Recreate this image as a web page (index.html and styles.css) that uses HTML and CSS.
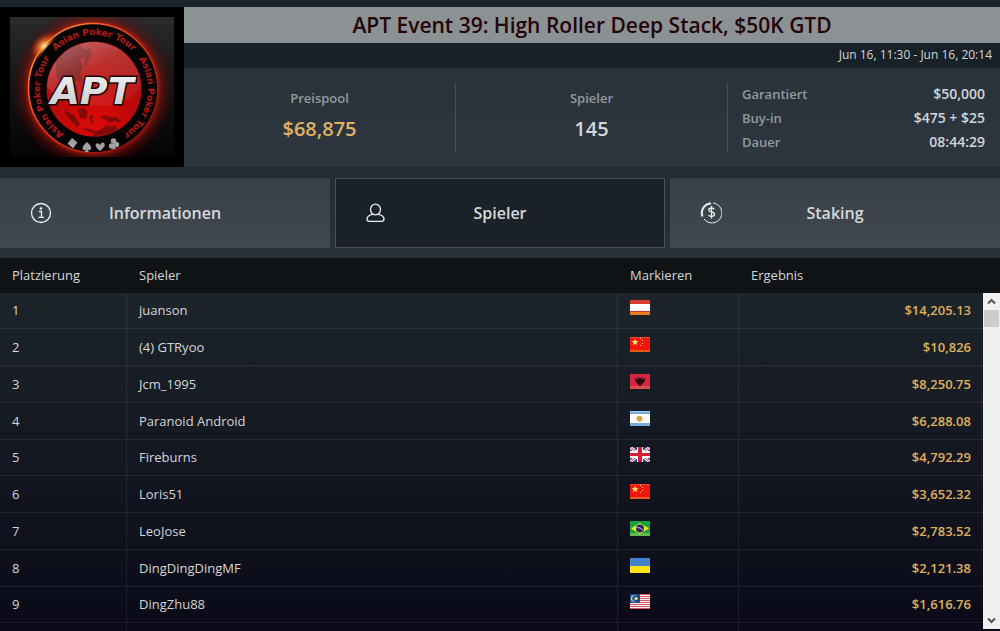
FILE: index.html
```html
<!DOCTYPE html>
<html lang="de">
<head>
<meta charset="utf-8">
<title>APT Event 39</title>
<link rel="stylesheet" href="styles.css">
</head>
<body>
<div class="lobby">
  <header class="event">
    <div class="event-logo">
      <svg class="logo" viewBox="0 0 164 140" role="img" aria-label="APT Asian Poker Tour">
        <defs>
          <linearGradient id="back" x1="0" y1="0" x2="0" y2="1"><stop offset="0" stop-color="#2b2b2c"/><stop offset=".45" stop-color="#171616"/><stop offset="1" stop-color="#050304"/></linearGradient>
          <radialGradient id="halo"><stop offset=".76" stop-color="#f4200c" stop-opacity=".85"/><stop offset=".85" stop-color="#8d0d08" stop-opacity=".45"/><stop offset="1" stop-color="#400" stop-opacity="0"/></radialGradient>
          <radialGradient id="globe" cx=".5" cy=".85" r=".85"><stop offset="0" stop-color="#dc0a08"/><stop offset=".5" stop-color="#bd0808"/><stop offset="1" stop-color="#a81414"/></radialGradient>
          <linearGradient id="gloss" x1="0" y1="0" x2=".7" y2="1"><stop offset="0" stop-color="#fff" stop-opacity=".4"/><stop offset=".5" stop-color="#fff" stop-opacity=".14"/><stop offset="1" stop-color="#fff" stop-opacity=".06"/></linearGradient>
          <radialGradient id="flare"><stop offset="0" stop-color="#fff6b8"/><stop offset=".3" stop-color="#ff9a3c" stop-opacity=".8"/><stop offset="1" stop-color="#f30" stop-opacity="0"/></radialGradient>
          <linearGradient id="rim" x1="0" y1="0" x2="1" y2="1"><stop offset="0" stop-color="#ffb33a"/><stop offset=".4" stop-color="#f5401c"/><stop offset="1" stop-color="#5a0805"/></linearGradient>
          <linearGradient id="steel" x1="0" y1="0" x2="0" y2="1"><stop offset="0" stop-color="#f4f4f4"/><stop offset="1" stop-color="#c6c6c8"/></linearGradient>
          <clipPath id="disc"><circle cx="84" cy="72" r="47"/></clipPath>
          <path id="orbit" d="M53.800 116.800A54 54 0 1 1 111.800 118.300"/>
        </defs>
        <rect width="164" height="140" fill="url(#back)"/>
        <circle cx="83" cy="71" r="82" fill="url(#halo)"/>
        <circle cx="83" cy="71" r="64.500" fill="#070303" stroke="url(#rim)" stroke-width="1.500"/>
        <ellipse cx="34" cy="29" rx="11" ry="16" fill="url(#flare)" transform="rotate(45 34 29)"/>
        <circle cx="84" cy="72" r="63" fill="#050304"/>
        <circle cx="84" cy="72" r="47.500" fill="url(#globe)"/>
        <g clip-path="url(#disc)">
          <path d="M46 44L52 36 58 35 61 28 70 27 72 31 77 33 80 31 82 37 79 43 76 49 74 47 75 40 70 42 73 50 70 57 73 63 70 66 68 62 65 65 68 74 65 81 61 72 57 64 51 66 46 58ZM54 92L59 96 64 98 70 107 67 110 61 104 56 98ZM68 93L73 90 78 95 76 102 70 101ZM79 99L84 98 82 102 84 107 80 105ZM72 111L79 112 86 114 84 116 76 114ZM90 101L94 98 99 100 106 100 112 105 104 104 100 106 95 102ZM83 120L86 114 92 112 97 108 102 110 106 108 107 113 114 118 108 127 99 123 93 123 87 125Z" fill="#6d0b0b" opacity=".8"/>
          <path d="M37 70Q37 23 84 24Q131 24 131 70Q116 88 95 89Q70 89 57 84Q45 80 37 70Z" fill="url(#gloss)"/>
        </g>
        <text class="logo-ring"><textPath href="#orbit" startOffset="0">Asian Poker Tour</textPath></text>
        <text class="logo-ring"><textPath href="#orbit" startOffset="95">Asian Poker Tour</textPath></text>
        <text class="logo-ring"><textPath href="#orbit" startOffset="190">Asian Poker Tour</textPath></text>
        <text class="logo-name" x="82" y="87" text-anchor="middle">APT</text>
        <g fill="#a1a1a1">
          <path d="M62 121L67.500 125.500 63 131.500 57.500 126.500Z"/>
          <path d="M77 125Q82 129 81 132Q80 134 77.500 132.500L79 135H74.500L76 132.500Q73 134 72.500 131.500Q72 129 77 125Z"/>
          <path d="M90 134Q84 129 86 127Q88 125 90 128Q92 124 94.500 126.500Q96 129 90 134Z"/>
          <circle cx="103.500" cy="124" r="2.700"/><circle cx="101.500" cy="129" r="2.700"/><circle cx="106.500" cy="127.500" r="2.700"/><path d="M103 125L106 131.500 102.500 132.500Z"/>
        </g>
      </svg>
    </div>
    <div class="event-main">
      <h1 class="event-title">APT Event 39: High Roller Deep Stack, $50K GTD</h1>
      <p class="event-time">Jun 16, 11:30 - Jun 16, 20:14</p>
      <div class="stats">
        <div class="stat"><span class="stat-label">Preispool</span><strong class="stat-value gold">$68,875</strong></div>
        <div class="stat"><span class="stat-label">Spieler</span><strong class="stat-value">145</strong></div>
        <dl class="facts">
          <div class="fact"><dt>Garantiert</dt><dd>$50,000</dd></div>
          <div class="fact"><dt>Buy-in</dt><dd>$475 + $25</dd></div>
          <div class="fact"><dt>Dauer</dt><dd>08:44:29</dd></div>
        </dl>
      </div>
    </div>
  </header>

  <nav class="tabs">
    <button class="tab" type="button">
      <svg class="tab-icon" viewBox="0 0 22 22"><circle cx="11" cy="11" r="9.500"/><path d="M9 9.500H11.500V15M8.500 15.300H14"/><circle cx="11" cy="6.500" r=".7"/></svg>
      <span class="tab-label">Informationen</span>
    </button>
    <button class="tab active" type="button">
      <svg class="tab-icon" viewBox="0 0 22 22"><ellipse cx="10.500" cy="7.500" rx="5" ry="5.300"/><path d="M7.800 12.300C4 13 2 14.500 2 17C2 18.700 2.700 19.300 4.500 19.300H16.500C18.300 19.300 19 18.700 19 17C19 14.500 17 13 13.200 12.300"/></svg>
      <span class="tab-label">Spieler</span>
    </button>
    <button class="tab" type="button">
      <svg class="tab-icon" viewBox="0 0 22 22"><path d="M13 1A10 10 0 1 1 4 17" stroke-width="1"/><path d="M2.500 14.500A9.500 9.500 0 0 1 11 1.500" stroke-width="2"/><path d="M14.300 7.300C13.500 5.500 8.800 5.400 8.800 7.900C8.800 10.500 14.500 9.400 14.500 12.200C14.500 15 9.300 14.900 8.500 13M11.500 4V16.500"/></svg>
      <span class="tab-label">Staking</span>
    </button>
  </nav>

  <main class="results">
    <table class="ranking">
      <colgroup><col class="col-rank"><col class="col-player"><col class="col-flag"><col></colgroup>
      <thead><tr><th>Platzierung</th><th>Spieler</th><th>Markieren</th><th>Ergebnis</th></tr></thead>
      <tbody>
        <tr><td>1</td><td>juanson</td><td><svg class="flag" viewBox="0 0 20 15" role="img" aria-label="Österreich"><path fill="#d63c32" d="M0 0h20v4H0z"/><path fill="#fff" d="M0 4h20v7H0z"/><path fill="#c9372c" d="M0 11h20v2H0z"/><path fill="#ed7d20" d="M0 12h20v3H0z"/></svg></td><td>$14,205.13</td></tr>
        <tr><td>2</td><td>(4) GTRyoo</td><td><svg class="flag" viewBox="0 0 20 15" role="img" aria-label="China"><path fill="#f8140c" d="M0 0h20v15H0z"/><path fill="#e94730" d="M0 0h20v1H0z"/><path fill="#ed5a12" d="M0 13h20v2H0z"/><path fill="#ffe276" d="M5 1.500l1 2.400 2.600.1-2 1.600.7 2.600-2.300-1.500-2.300 1.500.7-2.600-2-1.600 2.600-.1zM10 1h1v1h-1zM12 3h1v1h-1zM12 6h1v1h-1zM10 8h1v1h-1z"/></svg></td><td>$10,826</td></tr>
        <tr><td>3</td><td>Jcm_1995</td><td><svg class="flag" viewBox="0 0 20 15" role="img" aria-label="Albanien"><path fill="#d52742" d="M0 0h20v15H0z"/><path fill="#dc4e4d" d="M0 12h20v3H0z"/><path fill="#290810" d="M8 3l2 1.500L12 3l.5 1.200-1 1H13l2-1.700-.3 2.500.6.8-1.300 1 .5 1-1.700-.3.200 1.500-1.500-.5.500 1.500-1-.2-1 1.700-1-1.700-1 .2.500-1.500L7 10l.2-1.500-1.700.3.500-1-1.300-1 .6-.8L5 3.500l2 1.700h1.500l-1-1z"/></svg></td><td>$8,250.75</td></tr>
        <tr><td>4</td><td>Paranoid Android</td><td><svg class="flag" viewBox="0 0 20 15" role="img" aria-label="Argentinien"><path fill="#fff" d="M0 0h20v15H0z"/><path fill="#72addb" d="M0 0h20v3H0zM0 12h20v3H0z"/><path fill="#a8cee9" d="M0 0h20v1H0z"/><circle cx="9.500" cy="7.700" r="3" fill="#dda34b"/></svg></td><td>$6,288.08</td></tr>
        <tr><td>5</td><td>Fireburns</td><td><svg class="flag" viewBox="0 0 20 15" role="img" aria-label="Großbritannien"><path fill="#163c86" d="M0 0h20v15H0z"/><path stroke="#fff" stroke-width="3" d="M0 0l20 15M20 0L0 15"/><path stroke="#cf2339" d="M0 0l20 15M20 0L0 15"/><path fill="#fff" d="M7 0h6v15H7zM0 4h20v7H0z"/><path fill="#d51c38" d="M8 0h4v15H8zM0 6h20v3H0z"/></svg></td><td>$4,792.29</td></tr>
        <tr><td>6</td><td>Loris51</td><td><svg class="flag" viewBox="0 0 20 15" role="img" aria-label="China"><path fill="#f8140c" d="M0 0h20v15H0z"/><path fill="#e94730" d="M0 0h20v1H0z"/><path fill="#ed5a12" d="M0 13h20v2H0z"/><path fill="#ffe276" d="M5 1.500l1 2.400 2.600.1-2 1.600.7 2.600-2.300-1.500-2.300 1.500.7-2.600-2-1.600 2.600-.1zM10 1h1v1h-1zM12 3h1v1h-1zM12 6h1v1h-1zM10 8h1v1h-1z"/></svg></td><td>$3,652.32</td></tr>
        <tr><td>7</td><td>LeoJose</td><td><svg class="flag" viewBox="0 0 20 15" role="img" aria-label="Brasilien"><path fill="#16a340" d="M0 0h20v15H0z"/><path fill="#62ba50" d="M0 12h20v3H0z"/><path fill="#f8e422" d="M1 7.500L10 2l9 5.500-9 5.500z"/><circle cx="10" cy="7.500" r="4" fill="#262968"/><path stroke="#adbed5" fill="none" d="M6.500 6.500Q10 6 13 9"/></svg></td><td>$2,783.52</td></tr>
        <tr><td>8</td><td>DingDingDingMF</td><td><svg class="flag" viewBox="0 0 20 15" role="img" aria-label="Ukraine"><path fill="#4481c8" d="M0 0h20v8H0z"/><path fill="#ffe312" d="M0 8h20v7H0z"/></svg></td><td>$2,121.38</td></tr>
        <tr><td>9</td><td>DingZhu88</td><td><svg class="flag" viewBox="0 0 20 15" role="img" aria-label="Malaysia"><path fill="#fbf1f1" d="M0 0h20v15H0z"/><path fill="#dc5362" d="M0 0h20v1H0zM0 2h20v1H0zM0 4h20v1H0zM0 6h20v1H0zM0 8h20v1H0zM0 10h20v1H0zM0 12h20v1H0zM0 14h20v1H0z"/><path fill="#174b96" d="M0 0h10v9H0z"/><circle cx="4" cy="4.500" r="3.200" fill="#d8d278"/><circle cx="5" cy="4.500" r="2.700" fill="#174b96"/><circle cx="6" cy="4.500" r="1.600" fill="#eee55c"/></svg></td><td>$1,616.76</td></tr>
        <tr class="next-row"><td></td><td></td><td></td><td></td></tr>
      </tbody>
    </table>
    <div class="scrollbar">
      <button class="scroll-btn" type="button" aria-label="Nach oben"><svg viewBox="0 0 9 7"><path d="M1 5.500L4.500 2 8 5.500"/></svg></button>
      <div class="scroll-track"><div class="scroll-thumb"></div></div>
      <button class="scroll-btn" type="button" aria-label="Nach unten"><svg viewBox="0 0 9 7"><path d="M1 1.500L4.500 5 8 1.500"/></svg></button>
    </div>
  </main>
</div>
</body>
</html>
```
FILE: styles.css
```css
* { box-sizing: border-box; }

body {
  margin: 0;
  overflow: hidden;
  background: #0b0b19;
  color: #d4d6d8;
  font: 13px/20px "Open Sans", "Noto Sans", sans-serif;
}

.lobby {
  min-height: 100vh;
  display: flex;
  flex-direction: column;
  padding-top: 7px;
  background: linear-gradient(#1a232e 0, #222c33 170px, #2a3038 258px);
}

.event { display: flex; }

.event-logo {
  flex: none;
  width: 184px;
  height: 160px;
  padding: 10px;
  background: #000;
}

.logo { display: block; width: 164px; height: 140px; }

.logo-ring {
  font: bold 9px "DejaVu Sans", sans-serif;
  fill: #b91712;
}

.logo-name {
  font: italic bold 38px "DejaVu Sans", sans-serif;
  fill: url(#steel);
  stroke: #180506;
  stroke-width: 3px;
  paint-order: stroke;
}

.event-main {
  flex: 1;
  display: flex;
  flex-direction: column;
}

.event-title {
  margin: 0;
  background: #8c9194;
  color: #230508;
  font-size: 21px;
  font-weight: 600;
  line-height: 36px;
  text-align: center;
}

.event-time {
  margin: 0;
  padding: 0 8px 1px;
  background: #182127;
  font-size: 12px;
  line-height: 24px;
  text-align: right;
}

.stats {
  flex: 1;
  display: grid;
  grid-template-columns: 1fr 1fr 1fr;
  align-items: center;
  background: linear-gradient(#29333a, #2d363f);
}

.stat {
  height: 70px;
  display: flex;
  flex-direction: column;
  align-items: center;
  justify-content: center;
  gap: 8px;
  padding-bottom: 6px;
  border-right: 1px solid #454d55;
}

.stat-label { color: #939a9f; font-weight: 600; line-height: 20px; }
.stat-value { font-size: 20px; font-weight: 600; line-height: 26px; }
.gold { color: #e0b363; }

.facts { margin: 0; padding: 0 15px 0 14px; }
.fact { display: flex; justify-content: space-between; line-height: 24px; font-weight: 600; }
.fact dt { color: #939a9f; }
.fact dd { margin: 0; font-size: 14px; }

.tabs {
  display: grid;
  grid-template-columns: 1fr 1fr 1fr;
  gap: 5px;
  margin: 11px 0 10px;
}

.tab {
  height: 70px;
  display: flex;
  align-items: center;
  padding: 0 30px;
  border: 0;
  background: linear-gradient(#394148, #40474e);
  color: #d7dadc;
  font: 600 16px/24px "Open Sans", "Noto Sans", sans-serif;
}

.tab.active {
  background: linear-gradient(#19222a, #1c2128);
  box-shadow: inset 0 0 0 1px #4a5157;
}

.tab-icon {
  width: 22px;
  height: 22px;
  fill: none;
  stroke: #edf0f2;
  stroke-width: 1.300;
}

.tab-label { flex: 1; padding-right: 22px; text-align: center; }

.results {
  position: relative;
  flex: 1;
  background: linear-gradient(#1d242a 35px, #0a0a18);
}

.ranking {
  width: 100%;
  table-layout: fixed;
  border-collapse: separate;
  border-spacing: 0;
}

.col-rank { width: 12.7%; }
.col-player { width: 49.1%; }
.col-flag { width: 12.1%; }

th, td { padding: 0 12px; text-align: left; font-weight: 400; }

th { height: 35px; padding-bottom: 1px; background: #101315; }

td {
  height: 37px;
  border-right: 1px solid rgba(255, 255, 255, .08);
  border-bottom: 1px solid rgba(255, 255, 255, .08);
}

tbody tr:nth-child(4n+1) td { height: 36px; padding-bottom: 1px; }

td:last-child {
  padding-right: 29px;
  border-right: 0;
  color: #dfb05c;
  font-weight: 600;
  text-align: right;
}

.next-row td { height: 8px; border-bottom: 0; }

.flag { display: block; width: 20px; height: 15px; margin-bottom: 5px; }

.scrollbar {
  position: absolute;
  top: 35px;
  right: 0;
  bottom: 2px;
  width: 17px;
  display: flex;
  flex-direction: column;
  background: #f0f0f0;
}

.scroll-btn {
  height: 17px;
  display: grid;
  place-items: center;
  padding: 0;
  border: 0;
  background: none;
}

.scroll-btn svg { width: 9px; height: 7px; fill: none; stroke: #555; stroke-width: 2; }
.scroll-track { flex: 1; padding: 0 1px; }
.scroll-thumb { height: 17px; background: #cdcdcd; }
```
